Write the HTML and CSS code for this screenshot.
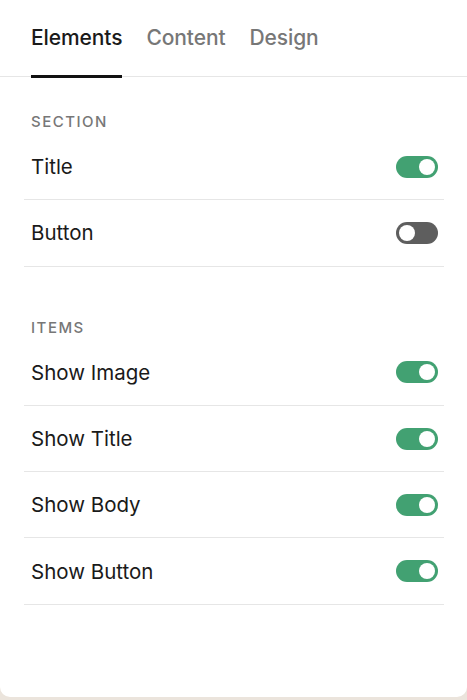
FILE: index.html
```html
<!DOCTYPE html>
<html lang="en">
<head>
    <meta charset="UTF-8">
    <meta name="viewport" content="width=device-width, initial-scale=1.0">
    <title>Elements</title>
    <link rel="stylesheet" href="styles.css">
</head>
<body>
    <div class="panel">
        <div class="tabs">
            <div class="tab active">Elements</div>
            <div class="tab">Content</div>
            <div class="tab">Design</div>
        </div>

        <div class="group">
            <div class="group-label">SECTION</div>
            <div class="row">
                <span>Title</span>
                <span class="toggle on"></span>
            </div>
            <div class="row">
                <span>Button</span>
                <span class="toggle"></span>
            </div>
        </div>

        <div class="group items">
            <div class="group-label">ITEMS</div>
            <div class="row">
                <span>Show Image</span>
                <span class="toggle on"></span>
            </div>
            <div class="row">
                <span>Show Title</span>
                <span class="toggle on"></span>
            </div>
            <div class="row">
                <span>Show Body</span>
                <span class="toggle on"></span>
            </div>
            <div class="row">
                <span>Show Button</span>
                <span class="toggle on"></span>
            </div>
        </div>
    </div>
</body>
</html>
```

FILE: styles.css
```css
html, body {
    margin: 0;
    height: 100%;
}
body {
    background-color: #ebe4dc;
    font-family: Inter, "Liberation Sans", Arial, sans-serif;
    color: #1a1a1a;
}
.panel {
    height: 697px;
    background-color: #fff;
    border-radius: 0 0 10px 10px;
    box-sizing: border-box;
}
.tabs {
    display: flex;
    gap: 24px;
    padding: 0 31px;
    height: 77px;
    border-bottom: 1px solid #e6e6e6;
    box-sizing: border-box;
}
.tab {
    font-size: 21px;
    font-weight: 500;
    color: #777;
    padding-top: 25px;
    box-sizing: border-box;
    height: 77px;
    letter-spacing: -0.1px;
}
.tab.active {
    color: #1a1a1a;
    border-bottom: 3px solid #111;
    height: 78px;
}
.group {
    padding: 33px 23px 0 24px;
}
.group.items {
    padding-top: 49px;
}
.group-label {
    height: 24px;
    line-height: 24px;
    padding-left: 7px;
    font-size: 15px;
    font-weight: 500;
    letter-spacing: 1.5px;
    color: #777;
}
.row {
    display: flex;
    align-items: center;
    justify-content: space-between;
    height: 65.3px;
    padding: 0 6px 0 7px;
    border-bottom: 1px solid #e6e6e6;
    font-size: 20.5px;
}
.toggle {
    position: relative;
    width: 42px;
    height: 22px;
    border-radius: 11px;
    background-color: #5e5e5e;
}
.toggle::after {
    content: "";
    position: absolute;
    top: 3px;
    left: 3px;
    width: 16px;
    height: 16px;
    border-radius: 50%;
    background-color: #fff;
}
.toggle.on {
    background-color: #42a172;
}
.toggle.on::after {
    left: 23px;
}
```
